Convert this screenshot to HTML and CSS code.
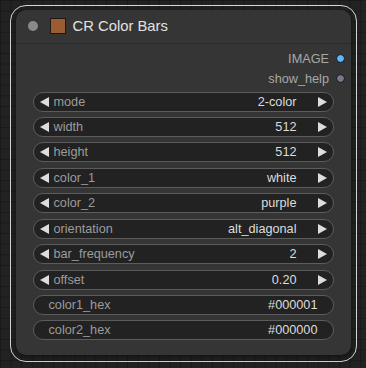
FILE: index.html
```html
<!DOCTYPE html>
<html lang="en">
<head>
  <meta charset="UTF-8">
  <title>CR Color Bars</title>
  <link rel="stylesheet" href="styles.css">
</head>
<body>
  <div class="selection">
    <div class="node">
      <div class="title-bar">
        <span class="collapse-dot"></span>
        <span class="swatch"></span>
        <span class="title">CR Color Bars</span>
      </div>

      <div class="outputs">
        <div class="output">IMAGE <span class="slot slot-image"></span></div>
        <div class="output">show_help <span class="slot slot-string"></span></div>
      </div>

      <div class="widgets">
        <div class="widget combo">
          <span class="arrow left"></span><span class="label">mode</span><span class="value">2-color</span><span class="arrow right"></span>
        </div>
        <div class="widget combo">
          <span class="arrow left"></span><span class="label">width</span><span class="value">512</span><span class="arrow right"></span>
        </div>
        <div class="widget combo">
          <span class="arrow left"></span><span class="label">height</span><span class="value">512</span><span class="arrow right"></span>
        </div>
        <div class="widget combo">
          <span class="arrow left"></span><span class="label">color_1</span><span class="value">white</span><span class="arrow right"></span>
        </div>
        <div class="widget combo">
          <span class="arrow left"></span><span class="label">color_2</span><span class="value">purple</span><span class="arrow right"></span>
        </div>
        <div class="widget combo">
          <span class="arrow left"></span><span class="label">orientation</span><span class="value">alt_diagonal</span><span class="arrow right"></span>
        </div>
        <div class="widget combo">
          <span class="arrow left"></span><span class="label">bar_frequency</span><span class="value">2</span><span class="arrow right"></span>
        </div>
        <div class="widget combo">
          <span class="arrow left"></span><span class="label">offset</span><span class="value">0.20</span><span class="arrow right"></span>
        </div>
        <div class="widget text">
          <span class="label">color1_hex</span><span class="value">#000001</span>
        </div>
        <div class="widget text">
          <span class="label">color2_hex</span><span class="value">#000000</span>
        </div>
      </div>
    </div>
  </div>
</body>
</html>
```

FILE: styles.css
```css
body {
  margin: 0;
  width: 366px;
  height: 368px;
  overflow: hidden;
  background-color: #222222;
  background-image:
    linear-gradient(rgba(0, 0, 0, 0.25) 1px, transparent 1px),
    linear-gradient(90deg, rgba(0, 0, 0, 0.25) 1px, transparent 1px);
  background-size: 10.6px 10.6px;
  font-family: "Liberation Sans", Arial, sans-serif;
  padding-top: 5px;
  padding-left: 10px;
  box-sizing: border-box;
}

.selection {
  width: 347px;
  height: 357px;
  box-sizing: border-box;
  border: 1.5px solid #d8d8d8;
  border-radius: 16px;
  padding: 3.5px 0 0 4.5px;
}

.node {
  width: 335px;
  height: 345px;
  background-color: #353535;
  border-radius: 10px;
  box-shadow: 0 2px 6px rgba(0, 0, 0, 0.5);
}

.title-bar {
  height: 33px;
  border-bottom: 1px solid #2b2b2b;
  display: flex;
  align-items: center;
  padding-left: 12px;
}

.collapse-dot {
  width: 10px;
  height: 10px;
  border-radius: 50%;
  background-color: #8a8a8a;
}

.swatch {
  width: 14px;
  height: 14px;
  margin-left: 12px;
  background-color: #9b5c31;
  border: 1px solid #1a1a1a;
}

.title {
  margin-left: 7px;
  font-size: 14.8px;
  color: #e2e2e2;
}

.outputs {
  padding: 5px 0 3px;
}

.output {
  height: 20px;
  display: flex;
  justify-content: flex-end;
  align-items: center;
  gap: 7px;
  padding-right: 5.5px;
  font-size: 12.7px;
  color: #a8a8a8;
}

.slot {
  width: 7px;
  height: 7px;
  border-radius: 50%;
  border: 1px solid #151515;
}

.slot-image {
  background-color: #64b5f6;
}

.slot-string {
  background-color: #78788a;
}

.widgets {
  display: flex;
  flex-direction: column;
  gap: 5.44px;
  padding: 0 17px;
}

.widget {
  height: 20px;
  box-sizing: border-box;
  border: 1px solid #5c5c5c;
  border-radius: 10px;
  background-color: #222222;
  display: flex;
  align-items: center;
  font-size: 12.7px;
}

.widget .label {
  color: #9c9c9c;
  flex: 1;
}

.widget .value {
  color: #dddddd;
}

.combo {
  padding: 0 6px;
}

.combo .label {
  margin-left: 5px;
}

.combo .value {
  margin-right: 21px;
}

.text {
  padding: 0 15px;
}

.arrow {
  width: 0;
  height: 0;
  border-top: 5px solid transparent;
  border-bottom: 5px solid transparent;
}

.arrow.left {
  border-right: 9px solid #dddddd;
}

.arrow.right {
  border-left: 9px solid #dddddd;
}
```
